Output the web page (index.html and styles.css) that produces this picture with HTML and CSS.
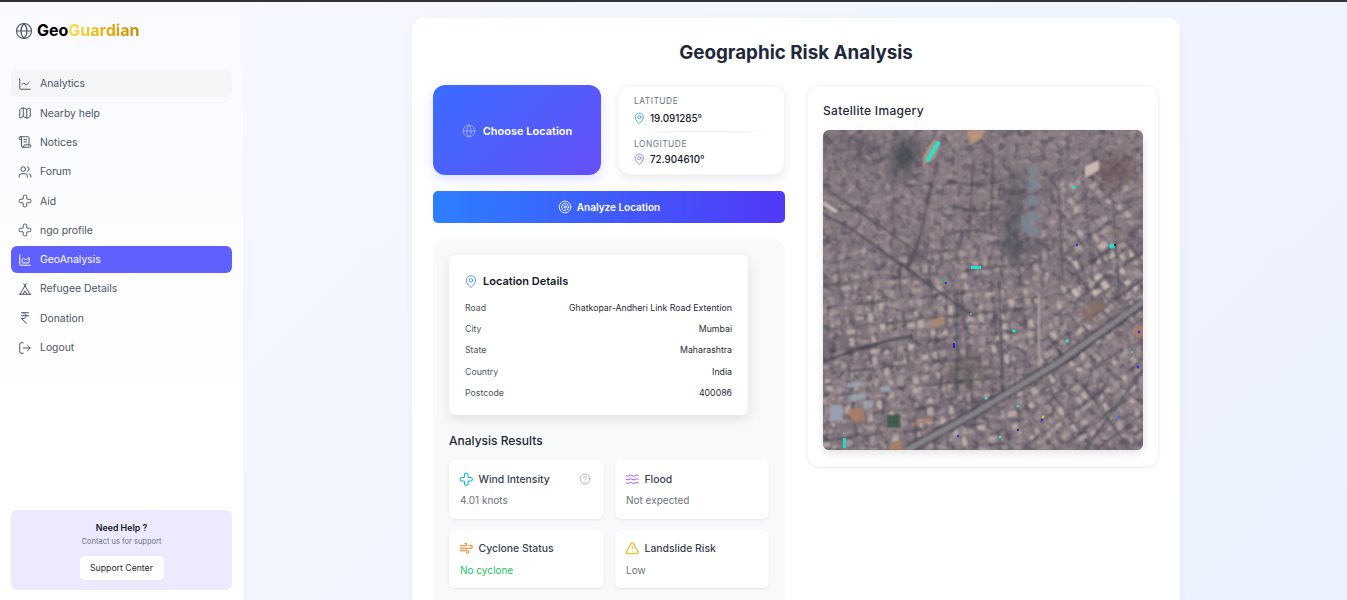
FILE: index.html
```html
<!DOCTYPE html>
<html lang="en">
<head>
  <meta charset="UTF-8" />
  <meta name="viewport" content="width=device-width, initial-scale=1.0"/>
  <title>GeoGuardian - Geographic Risk Analysis</title>
  <link rel="stylesheet" href="styles.css">
</head>
<body>
  <svg class="sprite" width="0" height="0" aria-hidden="true">
    <symbol id="i-globe" viewBox="0 0 24 24"><circle cx="12" cy="12" r="10"/><path d="M12 2a14.5 14.5 0 0 0 0 20 14.5 14.5 0 0 0 0-20"/><path d="M2 12h20"/></symbol>
    <symbol id="i-line" viewBox="0 0 24 24"><path d="M3 3v16a2 2 0 0 0 2 2h16"/><path d="m19 9-5 5-4-4-3 3"/></symbol>
    <symbol id="i-map" viewBox="0 0 24 24"><path d="M14.106 5.553a2 2 0 0 0 1.788 0l3.659-1.83A1 1 0 0 1 21 4.619v12.764a1 1 0 0 1-.553.894l-4.553 2.277a2 2 0 0 1-1.788 0l-4.212-2.106a2 2 0 0 0-1.788 0l-3.659 1.83A1 1 0 0 1 3 19.381V6.618a1 1 0 0 1 .553-.894l4.553-2.277a2 2 0 0 1 1.788 0z"/><path d="M15 5.764v15"/><path d="M9 3.236v15"/></symbol>
    <symbol id="i-scroll" viewBox="0 0 24 24"><path d="M15 12h-5"/><path d="M15 8h-5"/><path d="M19 17V5a2 2 0 0 0-2-2H4"/><path d="M8 21h12a2 2 0 0 0 2-2v-1a1 1 0 0 0-1-1H11a1 1 0 0 0-1 1v1a2 2 0 1 1-4 0V5a2 2 0 1 0-4 0v2a1 1 0 0 0 1 1h3"/></symbol>
    <symbol id="i-users" viewBox="0 0 24 24"><path d="M16 21v-2a4 4 0 0 0-4-4H6a4 4 0 0 0-4 4v2"/><circle cx="9" cy="7" r="4"/><path d="M22 21v-2a4 4 0 0 0-3-3.87"/><path d="M16 3.13a4 4 0 0 1 0 7.75"/></symbol>
    <symbol id="i-cross" viewBox="0 0 24 24"><path d="M4 9a2 2 0 0 0-2 2v2a2 2 0 0 0 2 2h4a1 1 0 0 1 1 1v4a2 2 0 0 0 2 2h2a2 2 0 0 0 2-2v-4a1 1 0 0 1 1-1h4a2 2 0 0 0 2-2v-2a2 2 0 0 0-2-2h-4a1 1 0 0 1-1-1V4a2 2 0 0 0-2-2h-2a2 2 0 0 0-2 2v4a1 1 0 0 1-1 1z"/></symbol>
    <symbol id="i-area" viewBox="0 0 24 24"><path d="M3 3v16a2 2 0 0 0 2 2h16"/><path d="M7 11.207a.5.5 0 0 1 .146-.353l2-2a.5.5 0 0 1 .708 0l3.292 3.292a.5.5 0 0 0 .708 0l4.292-4.292a.5.5 0 0 1 .854.353V16a1 1 0 0 1-1 1H8a1 1 0 0 1-1-1z"/></symbol>
    <symbol id="i-tent" viewBox="0 0 24 24"><path d="M3.5 21 14 3"/><path d="M20.5 21 10 3"/><path d="M15.5 21 12 15l-3.5 6"/><path d="M2 21h20"/></symbol>
    <symbol id="i-rupee" viewBox="0 0 24 24"><path d="M6 3h12"/><path d="M6 8h12"/><path d="m6 13 8.5 8"/><path d="M6 13h3"/><path d="M9 13c6.667 0 6.667-10 0-10"/></symbol>
    <symbol id="i-logout" viewBox="0 0 24 24"><path d="M9 21H5a2 2 0 0 1-2-2V5a2 2 0 0 1 2-2h4"/><path d="m16 17 5-5-5-5"/><path d="M21 12H9"/></symbol>
    <symbol id="i-pin" viewBox="0 0 24 24"><path d="M20 10c0 4.993-5.539 10.193-7.399 11.799a1 1 0 0 1-1.202 0C9.539 20.193 4 14.993 4 10a8 8 0 0 1 16 0"/><circle cx="12" cy="10" r="3"/></symbol>
    <symbol id="i-target" viewBox="0 0 24 24"><circle cx="12" cy="12" r="10"/><circle cx="12" cy="12" r="6"/><circle cx="12" cy="12" r="2"/></symbol>
    <symbol id="i-help" viewBox="0 0 24 24"><circle cx="12" cy="12" r="10"/><path d="M9.09 9a3 3 0 0 1 5.83 1c0 2-3 3-3 3"/><path d="M12 17h.01"/></symbol>
    <symbol id="i-waves" viewBox="0 0 24 24"><path d="M2 6c.6.5 1.2 1 2.5 1C7 7 7 5 9.5 5c2.6 0 2.4 2 5 2 2.5 0 2.5-2 5-2 1.3 0 1.9.5 2.5 1"/><path d="M2 12c.6.5 1.2 1 2.5 1 2.5 0 2.5-2 5-2 2.6 0 2.4 2 5 2 2.5 0 2.5-2 5-2 1.3 0 1.9.5 2.5 1"/><path d="M2 18c.6.5 1.2 1 2.5 1 2.5 0 2.5-2 5-2 2.6 0 2.4 2 5 2 2.5 0 2.5-2 5-2 1.3 0 1.9.5 2.5 1"/></symbol>
    <symbol id="i-wind" viewBox="0 0 24 24"><path d="M17.7 7.7a2.5 2.5 0 1 1 1.8 4.3H2"/><path d="M9.6 4.6A2 2 0 1 1 11 8H2"/><path d="M12.6 19.4A2 2 0 1 0 14 16H2"/></symbol>
    <symbol id="i-alert" viewBox="0 0 24 24"><path d="m21.73 18-8-14a2 2 0 0 0-3.48 0l-8 14A2 2 0 0 0 4 21h16a2 2 0 0 0 1.73-3"/><path d="M12 9v4"/><path d="M12 17h.01"/></symbol>
  </svg>

  <div class="app">
    <aside class="sidebar">
      <div class="logo">
        <svg class="icon logo-icon"><use href="#i-globe"/></svg>
        <span class="logo-text">Geo<span class="logo-accent">Guardian</span></span>
      </div>

      <nav class="nav">
        <a class="nav-item hovered"><svg class="icon"><use href="#i-line"/></svg>Analytics</a>
        <a class="nav-item"><svg class="icon"><use href="#i-map"/></svg>Nearby help</a>
        <a class="nav-item"><svg class="icon"><use href="#i-scroll"/></svg>Notices</a>
        <a class="nav-item"><svg class="icon"><use href="#i-users"/></svg>Forum</a>
        <a class="nav-item"><svg class="icon"><use href="#i-cross"/></svg>Aid</a>
        <a class="nav-item"><svg class="icon"><use href="#i-cross"/></svg>ngo profile</a>
        <a class="nav-item active"><svg class="icon"><use href="#i-area"/></svg>GeoAnalysis</a>
        <a class="nav-item"><svg class="icon"><use href="#i-tent"/></svg>Refugee Details</a>
        <a class="nav-item"><svg class="icon"><use href="#i-rupee"/></svg>Donation</a>
        <a class="nav-item"><svg class="icon"><use href="#i-logout"/></svg>Logout</a>
      </nav>

      <div class="help-box">
        <div class="help-title">Need Help ?</div>
        <div class="help-sub">Contact us for support</div>
        <button class="help-btn">Support Center</button>
      </div>
    </aside>

    <main class="main">
      <div class="page-card">
        <h1>Geographic Risk Analysis</h1>

        <div class="columns">
          <section class="left-col">
            <div class="picker-row">
              <button class="choose-btn"><svg class="icon"><use href="#i-globe"/></svg>Choose Location</button>
              <div class="coords">
                <div class="coord-label">LATITUDE</div>
                <div class="coord-value"><svg class="icon pin-blue"><use href="#i-pin"/></svg>19.091285°</div>
                <div class="coord-line"></div>
                <div class="coord-label">LONGITUDE</div>
                <div class="coord-value"><svg class="icon pin-violet"><use href="#i-pin"/></svg>72.904610°</div>
              </div>
            </div>

            <button class="analyze-btn"><svg class="icon"><use href="#i-target"/></svg>Analyze Location</button>

            <div class="panel">
              <div class="details">
                <h3><svg class="icon pin-blue"><use href="#i-pin"/></svg>Location Details</h3>
                <div class="detail-row"><span>Road</span><b>Ghatkopar-Andheri Link Road Extention</b></div>
                <div class="detail-row"><span>City</span><b>Mumbai</b></div>
                <div class="detail-row"><span>State</span><b>Maharashtra</b></div>
                <div class="detail-row"><span>Country</span><b>India</b></div>
                <div class="detail-row"><span>Postcode</span><b>400086</b></div>
              </div>

              <h2>Analysis Results</h2>
              <div class="results">
                <div class="result-card">
                  <div class="result-head"><svg class="icon c-cyan"><use href="#i-cross"/></svg>Wind Intensity<svg class="icon help-icon"><use href="#i-help"/></svg></div>
                  <div class="result-value">4.01 knots</div>
                </div>
                <div class="result-card">
                  <div class="result-head"><svg class="icon c-purple"><use href="#i-waves"/></svg>Flood</div>
                  <div class="result-value">Not expected</div>
                </div>
                <div class="result-card">
                  <div class="result-head"><svg class="icon c-orange"><use href="#i-wind"/></svg>Cyclone Status</div>
                  <div class="result-value green">No cyclone</div>
                </div>
                <div class="result-card">
                  <div class="result-head"><svg class="icon c-amber"><use href="#i-alert"/></svg>Landslide Risk</div>
                  <div class="result-value">Low</div>
                </div>
              </div>
            </div>
          </section>

          <section class="right-col">
            <div class="sat-card">
              <h2>Satellite Imagery</h2>
              <svg class="sat-img" viewBox="0 0 320 320" role="img" aria-label="Satellite image of the selected location">
                <defs>
                  <filter id="patches" x="0" y="0" width="100%" height="100%" color-interpolation-filters="sRGB">
                    <feTurbulence type="fractalNoise" baseFrequency="0.02" numOctaves="3" seed="8"/>
                    <feColorMatrix values="0 0 0 0 0.38  0 0 0 0 0.35  0 0 0 0 0.4  2.6 0 0 0 -1.25"/>
                  </filter>
                  <filter id="mottle" x="0" y="0" width="100%" height="100%" color-interpolation-filters="sRGB">
                    <feTurbulence type="fractalNoise" baseFrequency="0.12" numOctaves="2" seed="3"/>
                    <feColorMatrix values="0 0 0 0 0.33  0 0 0 0 0.31  0 0 0 0 0.37  4 0 0 0 -1.95"/>
                    <feGaussianBlur stdDeviation="0.7"/>
                  </filter>
                  <filter id="flecks" x="0" y="0" width="100%" height="100%" color-interpolation-filters="sRGB">
                    <feTurbulence type="fractalNoise" baseFrequency="0.16 0.2" numOctaves="1" seed="21"/>
                    <feColorMatrix values="0 0 0 0 0.76  0 0 0 0 0.69  0 0 0 0 0.69  0 5 0 0 -2.6"/>
                    <feGaussianBlur stdDeviation="0.8"/>
                  </filter>
                  <filter id="broken" filterUnits="userSpaceOnUse" x="0" y="0" width="320" height="320" color-interpolation-filters="sRGB">
                    <feTurbulence type="fractalNoise" baseFrequency="0.09" numOctaves="2" seed="41" result="n"/>
                    <feColorMatrix in="n" values="0 0 0 0 0  0 0 0 0 0  0 0 0 0 0  7 0 0 0 -3" result="holes"/>
                    <feComposite in="SourceGraphic" in2="holes" operator="in"/>
                    <feGaussianBlur stdDeviation="1"/>
                  </filter>
                  <filter id="alleys" filterUnits="userSpaceOnUse" x="0" y="0" width="320" height="320" color-interpolation-filters="sRGB">
                    <feTurbulence type="fractalNoise" baseFrequency="0.06" numOctaves="2" seed="17" result="n"/>
                    <feColorMatrix in="n" values="0 0 0 0 0  0 0 0 0 0  0 0 0 0 0  0 7 0 0 -3" result="holes"/>
                    <feComposite in="SourceGraphic" in2="holes" operator="in"/>
                    <feGaussianBlur stdDeviation="1"/>
                  </filter>
                  <filter id="blur1"><feGaussianBlur stdDeviation="0.9"/></filter>
                  <filter id="blur3"><feGaussianBlur stdDeviation="7"/></filter>

                  <g id="roofs">
                    <rect x="2" y="2" width="9" height="6"/><rect x="14" y="2" width="6" height="9" fill="#a99ea0"/><rect x="24" y="3" width="10" height="5"/><rect x="37" y="2" width="6" height="8"/><rect x="47" y="3" width="10" height="6" fill="#b5a89f"/>
                    <rect x="3" y="12" width="6" height="9" fill="#b5a89f"/><rect x="12" y="14" width="9" height="5"/><rect x="25" y="11" width="5" height="9"/><rect x="33" y="12" width="9" height="6" fill="#a99ea0"/><rect x="46" y="12" width="5" height="9"/><rect x="53" y="13" width="5" height="7"/>
                    <rect x="2" y="25" width="9" height="5"/><rect x="14" y="23" width="6" height="8"/><rect x="24" y="24" width="8" height="6" fill="#a99ea0"/><rect x="36" y="23" width="5" height="9"/><rect x="44" y="25" width="12" height="5" fill="#b5a89f"/>
                    <rect x="4" y="34" width="5" height="8"/><rect x="12" y="35" width="10" height="5" fill="#b5a89f"/><rect x="26" y="33" width="5" height="8"/><rect x="34" y="35" width="9" height="6"/><rect x="47" y="34" width="7" height="8" fill="#a99ea0"/>
                  </g>
                  <pattern id="roofsA" width="60" height="44" patternUnits="userSpaceOnUse" patternTransform="rotate(-6)">
                    <use href="#roofs" fill="#d2c4b9"/>
                  </pattern>
                  <pattern id="roofsB" width="60" height="44" patternUnits="userSpaceOnUse" patternTransform="rotate(-36)">
                    <use href="#roofs" fill="#d2c4b9"/>
                  </pattern>
                  <pattern id="gridA" width="30" height="22" patternUnits="userSpaceOnUse" patternTransform="rotate(-6)">
                    <path d="M0 0H30M0 0V22" stroke="#343b47" stroke-width="3" fill="none"/>
                  </pattern>
                  <pattern id="gridB" width="30" height="22" patternUnits="userSpaceOnUse" patternTransform="rotate(-36)">
                    <path d="M0 0H30M0 0V22" stroke="#343b47" stroke-width="3" fill="none"/>
                  </pattern>

                  <linearGradient id="cityFade" x1="0" y1="0" x2="0.1" y2="1">
                    <stop offset="0.3" stop-color="#262626"/>
                    <stop offset="0.54" stop-color="#f0f0f0"/>
                  </linearGradient>
                  <mask id="cityMask"><rect width="320" height="320" fill="url(#cityFade)"/></mask>
                </defs>

                <rect width="320" height="320" fill="#877a80"/>
                <rect width="320" height="320" filter="url(#patches)" opacity="0.8"/>
                <rect width="320" height="320" filter="url(#mottle)" opacity="0.6"/>
                <rect width="320" height="320" filter="url(#flecks)" opacity="0.42"/>

                <!-- denser blocks, upper right -->
                <g opacity="0.55">
                  <polygon points="232,48 320,48 320,170 245,170" fill="url(#roofsB)" filter="url(#broken)"/>
                  <polygon points="232,48 320,48 320,170 245,170" fill="url(#gridB)" filter="url(#alleys)" opacity=".6"/>
                </g>

                <!-- city, lower half -->
                <g mask="url(#cityMask)">
                  <polygon points="0,0 255,0 190,320 0,320" fill="url(#gridA)" filter="url(#alleys)" opacity="0.7"/>
                  <polygon points="255,100 320,100 320,320 190,320" fill="url(#gridB)" filter="url(#alleys)" opacity="0.7"/>
                  <polygon points="0,0 255,0 190,320 0,320" fill="url(#roofsA)" filter="url(#broken)" opacity="0.72"/>
                  <polygon points="255,100 320,100 320,320 190,320" fill="url(#roofsB)" filter="url(#broken)" opacity="0.72"/>
                </g>

                <g filter="url(#blur3)">
                  <ellipse cx="82" cy="26" rx="7" ry="16" fill="#2e3a3f" opacity=".9" transform="rotate(25 82 26)"/>
                  <path d="M185 40 L200 40 L205 110 L192 150 L180 120Z" fill="#3e4a52" opacity=".45"/>
                  <ellipse cx="292" cy="42" rx="18" ry="16" fill="#5b4842" opacity=".5"/>
                  <ellipse cx="145" cy="240" rx="24" ry="18" fill="#564e50" opacity=".4"/>
                </g>

                <g filter="url(#blur1)">
                  <path d="M143 0 L161 0 L158 9 L148 14Z" fill="#b99478"/>
                  <path d="M110 10 L100 26 L100 36 L112 28 L118 12Z" fill="#a59a86"/>
                  <!-- rail lines and streets -->
                  <path d="M0 84 L30 100 L150 186" stroke="#4d4a55" stroke-width="2.5" fill="none" opacity=".75"/>
                  <path d="M8 62 L60 98 L110 134" stroke="#4d4a55" stroke-width="2" fill="none" opacity=".7"/>
                  <path d="M109 52 L96 110 L84 140" stroke="#3e3f48" stroke-width="2.5" fill="none" opacity=".6"/>
                  <path d="M125 50 Q150 60 180 50 M130 75 Q150 85 176 78 M122 105 Q150 96 172 104" stroke="#454651" stroke-width="2" fill="none" opacity=".6"/>
                  <path d="M150 30 L146 110 M170 20 L168 100" stroke="#454651" stroke-width="2" fill="none" opacity=".55"/>
                  <path d="M235 45 L240 150 M262 60 L270 150 M290 70 L296 160" stroke="#454651" stroke-width="2" fill="none" opacity=".5"/>
                  <path d="M60 30 Q30 45 40 5" stroke="#5a5560" stroke-width="2" fill="none" opacity=".5"/>
                  <path d="M0 73 L14 82" stroke="#c9bfb5" stroke-width="3.5"/>
                  <path d="M320 172 L236 232 L150 284 L84 320" stroke="#3b3b46" stroke-width="10" fill="none" opacity=".7"/>
                  <path d="M320 172 L236 232 L150 284 L84 320" stroke="#86828a" stroke-width="5.5" fill="none"/>
                  <path d="M216 165 L216 232" stroke="#aaa19c" stroke-width="2.5" fill="none"/>
                  <path d="M0 232 Q50 212 90 206" stroke="#3d3f49" stroke-width="3" fill="none" opacity=".7"/>
                  <path d="M134 160 L134 260 M176 150 L180 262" stroke="#3d424d" stroke-width="2.5" fill="none" opacity=".6"/>
                  <path d="M320 240 L262 320" stroke="#53525c" stroke-width="3" fill="none" opacity=".7"/>
                  <g fill="#7d8696" opacity=".85">
                    <rect x="205" y="36" width="11" height="9"/><rect x="205" y="49" width="11" height="11"/><rect x="205" y="65" width="11" height="11"/><rect x="205" y="81" width="11" height="11"/><rect x="205" y="96" width="11" height="10"/>
                    <rect x="198" y="86" width="8" height="16"/>
                  </g>
                  <g fill="#9aa0ad">
                    <rect x="7" y="275" width="13" height="16"/><rect x="24" y="252" width="15" height="5" transform="rotate(-8 32 255)"/><rect x="26" y="264" width="17" height="6" transform="rotate(-12 35 267)"/><rect x="58" y="256" width="9" height="6"/><rect x="40" y="271" width="10" height="7"/>
                  </g>
                  <path d="M24 280 L40 278 L42 290 L30 292Z" fill="#a87e66"/>
                  <rect x="64" y="285" width="13" height="13" fill="#3f5a4d"/>
                  <path d="M70 312 L78 310 L78 320 L66 320Z" fill="#a87e66"/>
                  <path d="M310 200 L320 194 L320 206 L312 208Z" fill="#a87e66"/>
                  <path d="M262 36 L276 30 L276 40 L262 48Z" fill="#c9bab0"/>
                  <path d="M258 182 L276 168 L284 176 L264 192Z" fill="#8a6e62" opacity=".7"/>
                  <path d="M108 190 L120 186 L122 194 L110 198Z" fill="#a98873"/>
                  <path d="M90 295 L110 288" stroke="#a87e66" stroke-width="2.5"/>
                </g>

                <g>
                  <path d="M115 13 L105 30" stroke="#22e5d0" stroke-width="3.5" stroke-linecap="round"/>
                  <rect x="148" y="136" width="10" height="3" fill="#22e0cc"/>
                  <circle cx="251" cy="57" r="1.6" fill="#22e0cc"/>
                  <circle cx="289" cy="116" r="2.6" fill="#22e0cc"/>
                  <circle cx="254" cy="115" r="1.3" fill="#3b2fe0"/>
                  <circle cx="292" cy="115" r="1.1" fill="#111"/>
                  <circle cx="121" cy="151" r="1.7" fill="#3a6"/>
                  <circle cx="123" cy="153" r="1.3" fill="#3b2fe0"/>
                  <circle cx="191" cy="201" r="1.8" fill="#22e0cc"/>
                  <circle cx="244" cy="211" r="1.8" fill="#3fd9d0"/>
                  <rect x="130" y="213" width="2" height="5" fill="#2222dd"/>
                  <circle cx="316" cy="202" r="1.4" fill="#3030dd"/>
                  <circle cx="315" cy="237" r="1.5" fill="#3030dd"/>
                  <circle cx="309" cy="222" r="1.2" fill="#3fd9d0"/>
                  <circle cx="163" cy="268" r="1.5" fill="#3fd9d0"/>
                  <circle cx="195" cy="276" r="1.5" fill="#3fd9d0"/>
                  <circle cx="220" cy="287" r="1.4" fill="#d8cf30"/>
                  <circle cx="219" cy="290" r="1.2" fill="#3030dd"/>
                  <circle cx="195" cy="300" r="1.1" fill="#1a1a80"/>
                  <circle cx="177" cy="307" r="1.5" fill="#3fd9d0"/>
                  <rect x="20" y="308" width="3" height="10" fill="#22d8c4"/>
                  <circle cx="135" cy="306" r="1.2" fill="#3030dd"/>
                  <circle cx="296" cy="287" r="1.6" fill="#3b6fdd"/>
                  <circle cx="148" cy="184" r="1" fill="#3fd9d0"/>
                </g>
              </svg>
            </div>
          </section>
        </div>
      </div>
    </main>
  </div>
</body>
</html>
```

FILE: styles.css
```css
* {
  box-sizing: border-box;
}

html, body {
  margin: 0;
  height: 100%;
  overflow: hidden;
}

body {
  font-family: "Inter", "Noto Sans", sans-serif;
  color: #1f2937;
  background: #333;
}

.sprite {
  position: absolute;
}

.icon {
  width: 12px;
  height: 12px;
  flex: none;
  fill: none;
  stroke: currentColor;
  stroke-width: 2;
  stroke-linecap: round;
  stroke-linejoin: round;
}

.app {
  display: flex;
  height: 598px;
  margin-top: 2px;
  overflow: hidden;
}

/* sidebar */
.sidebar {
  width: 243px;
  flex: none;
  display: flex;
  flex-direction: column;
  padding: 0 11px 10px;
  background: linear-gradient(180deg, #f9faff, #ffffff 70%);
}

.logo {
  display: flex;
  align-items: center;
  gap: 4px;
  height: 30px;
  margin: 13px 0 25.4px 4px;
}

.logo-icon {
  width: 18px;
  height: 18px;
  margin-top: 2px;
  stroke-width: 1.5;
  color: #4b5563;
}

.logo-text {
  font-size: 16px;
  font-weight: 700;
  color: #000;
}

.logo-accent {
  background: linear-gradient(90deg, #fde047, #eab308 50%, #ca8a04);
  -webkit-background-clip: text;
  background-clip: text;
  color: transparent;
}

.nav {
  display: flex;
  flex-direction: column;
  gap: 2.3px;
}

.nav-item {
  display: flex;
  align-items: center;
  gap: 8px;
  height: 27px;
  padding: 0 7px;
  border-radius: 6px;
  font-size: 10.4px;
  color: #4b5563;
}

.nav-item .icon {
  width: 14px;
  height: 14px;
  stroke-width: 1.7;
  color: #4b5563;
}

.nav-item.hovered {
  background: #f4f5f7;
}

.nav-item.active {
  background: #6060ff;
  color: #fff;
}

.nav-item.active .icon {
  color: #fff;
}

.help-box {
  margin-top: auto;
  height: 80px;
  padding: 12px 0 0;
  border-radius: 6px;
  background: #ede9fe;
  text-align: center;
}

.help-title {
  font-size: 8.8px;
  line-height: 11px;
  font-weight: 600;
  color: #111827;
}

.help-sub {
  margin-top: 4px;
  font-size: 7.5px;
  line-height: 10px;
  color: #6b7280;
}

.help-btn {
  display: block;
  width: 84px;
  height: 24px;
  margin: 9px auto 0;
  padding: 0;
  border: none;
  border-radius: 5px;
  background: #fff;
  font: 400 8.7px "Inter", sans-serif;
  color: #1f2937;
}

/* main area */
.main {
  flex: 1;
  padding-top: 16px;
  background: linear-gradient(135deg, #f5f8ff, #ecf1ff);
}

.page-card {
  width: 768px;
  height: 700px;
  margin-left: 169px;
  padding: 21px 21px 0;
  border-radius: 12px;
  background: #fff;
  box-shadow: 0 2px 8px rgba(30, 41, 90, 0.04);
}

h1 {
  margin: 0 0 18px;
  font-size: 18.8px;
  line-height: 28px;
  font-weight: 700;
  text-align: center;
  color: #1e293b;
}

.columns {
  display: grid;
  grid-template-columns: 352px 352px;
  gap: 22px;
}

.picker-row {
  display: flex;
  gap: 17px;
  margin-bottom: 16px;
}

.choose-btn {
  display: flex;
  align-items: center;
  justify-content: center;
  gap: 7px;
  width: 168px;
  height: 90px;
  padding: 2px 0 0;
  border: none;
  border-radius: 12px;
  background: linear-gradient(135deg, #3a6cff, #6650f8);
  box-shadow: 0 4px 12px rgba(70, 80, 240, 0.18);
  font: 600 11px "Inter", sans-serif;
  color: #fff;
}

.choose-btn .icon {
  width: 14px;
  height: 14px;
  stroke-width: 1.5;
  opacity: 0.5;
}

.coords {
  width: 167px;
  height: 90px;
  padding: 10px 15px 0;
  border: 1px solid #f3f4f6;
  border-radius: 12px;
  background: #fff;
  box-shadow: 0 4px 10px rgba(0, 0, 0, 0.08);
}

.coord-label {
  font-size: 8.4px;
  line-height: 11px;
  letter-spacing: 0.5px;
  color: #64748b;
}

.coord-value {
  display: flex;
  align-items: center;
  gap: 5px;
  margin: 4.5px 0 0 -1.5px;
  font-size: 9.8px;
  line-height: 13px;
  font-weight: 500;
  color: #111827;
}

.coord-value .icon {
  width: 12.5px;
  height: 12.5px;
  stroke-width: 1.7;
}

.coord-line {
  height: 1px;
  margin: 6px -10px 6px 0;
  background: linear-gradient(90deg, #fff, #e5e7eb 45%, #fff);
}

.coord-line + .coord-label {
  margin-top: 7.5px;
}

.coord-line + .coord-label + .coord-value {
  margin-top: 2.5px;
}

.pin-blue {
  color: #4b8ff8;
}

.pin-violet {
  color: #8b7cf8;
}

.analyze-btn {
  display: flex;
  align-items: center;
  justify-content: center;
  gap: 5px;
  width: 352px;
  height: 32px;
  margin-bottom: 16px;
  padding: 0;
  border: none;
  border-radius: 5px;
  background: linear-gradient(90deg, #2d7fff, #5238f8);
  font: 600 10px "Inter", sans-serif;
  color: #fff;
}

.analyze-btn .icon {
  width: 14px;
  height: 14px;
  stroke-width: 1.5;
}

.panel {
  height: 500px;
  padding: 16px;
  border-radius: 12px;
  background: #f8f9fb;
}

.details {
  width: 299px;
  height: 160px;
  padding: 16px 16px 0;
  border-radius: 6px;
  background: #fff;
  box-shadow: 0 4px 12px rgba(0, 0, 0, 0.1);
}

.details h3 {
  display: flex;
  align-items: center;
  gap: 5px;
  height: 20px;
  margin: 0 0 6.2px -1px;
  font-size: 11px;
  font-weight: 600;
  color: #111827;
}

.details h3 .icon {
  width: 14px;
  height: 15px;
  stroke-width: 1.6;
}

.detail-row {
  display: flex;
  justify-content: space-between;
  align-items: center;
  height: 21.25px;
  font-size: 8.75px;
}

.detail-row span {
  color: #4b5563;
}

.detail-row b {
  font-weight: 400;
  color: #1f2937;
}

.panel h2 {
  margin: 17px 0 11px;
  font-size: 12px;
  line-height: 17px;
  font-weight: 500;
  color: #1f2937;
}

.results {
  display: grid;
  grid-template-columns: 155px 154px;
  gap: 11px;
}

.result-card {
  height: 58.5px;
  padding: 11px 11px 0;
  border-radius: 6px;
  background: #fff;
  box-shadow: 0 1px 3px rgba(0, 0, 0, 0.08);
}

.result-head {
  display: flex;
  align-items: center;
  gap: 5.5px;
  height: 16px;
  margin-left: -1.5px;
  font-size: 10.4px;
  font-weight: 500;
  color: #374151;
}

.result-head .icon {
  width: 14.5px;
  height: 14.5px;
  stroke-width: 1.7;
}

.result-value {
  margin-top: 7px;
  font-size: 10px;
  line-height: 13px;
  color: #6b7280;
}

.result-value.green {
  color: #22c55e;
}

.result-head .help-icon {
  width: 12px;
  height: 12px;
  margin-left: auto;
  margin-right: 2px;
  stroke-width: 1.5;
  color: #9ca3af;
}

.c-cyan { color: #06b6d4; }
.c-purple { color: #b56cf5; }
.c-orange { color: #f97316; }
.c-amber { color: #f5ae0b; }

.sat-card {
  height: 382px;
  padding: 16px 15px 15px;
  border: 1px solid #f6f6f8;
  border-radius: 12px;
  background: #fff;
  box-shadow: 0 1px 3px rgba(0, 0, 0, 0.07);
}

.sat-card h2 {
  margin: 0 0 10px;
  font-size: 12px;
  line-height: 18px;
  font-weight: 500;
  letter-spacing: 0.3px;
  color: #1f2937;
}

.sat-img {
  display: block;
  width: 320px;
  height: 320px;
  border-radius: 6px;
  box-shadow: 0 3px 8px rgba(0, 0, 0, 0.12);
}
```
